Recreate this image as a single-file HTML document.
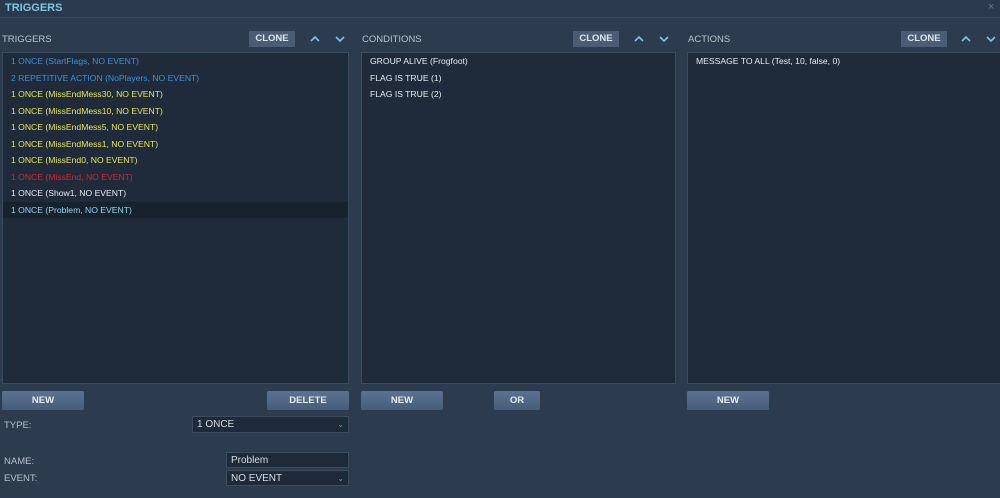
<!DOCTYPE html><html><head><style>
*{margin:0;padding:0;box-sizing:border-box}
body{width:1000px;height:498px;background:#2c3b4e;font-family:"Liberation Sans","DejaVu Sans",sans-serif;position:relative;overflow:hidden;color:#c8d0da}
.a{position:absolute}
.title{left:0;top:0;width:1000px;height:18px;background:#2a394b;border-bottom:1px solid #3d4d60}
.title span{position:absolute;left:5px;top:2px;font-weight:bold;font-size:11px;color:#7cc7e6}
.lbl{font-size:9.5px;color:#b8c2cc}
.list{background:#1f2b3a;border:1px solid #3c4b5d}
.row{height:16.5px;line-height:16.5px;font-size:8.6px;padding-left:8px;white-space:nowrap}
.clone{background:#4a5d74;color:#dfe6ee;font-weight:bold;font-size:9.5px;text-align:center;line-height:16px;height:16px}
.btn{background:linear-gradient(#5b7391,#465d79);color:#e4eaf0;font-weight:bold;font-size:9.5px;text-align:center;line-height:19px;height:19px;border-radius:2px}
.arr{color:#7cc7e6;font-size:11px}
.sel{background:#1e2a39;border:1px solid #3c4b5d;font-size:10px;color:#d5dce4;padding-left:4px;line-height:15px}
</style></head><body>
<div class="a title"><span>TRIGGERS</span><span style="left:988px;top:1px;color:#6a7888;font-weight:normal">×</span></div>

<div class="a lbl" style="left:2px;top:34px">TRIGGERS</div>
<div class="a clone" style="left:249px;top:31px;width:46px">CLONE</div>
<svg class="a" style="left:310px;top:34px" width="40" height="10"><path d="M1 7L5 3L9 7M26 3L30 7L34 3" stroke="#7cc7e6" stroke-width="1.6" fill="none"/></svg>
<div class="a list" style="left:2px;top:52px;width:347px;height:332px;padding-top:0px">
<div class="row" style="color:#3f8fdc">1 ONCE (StartFlags, NO EVENT)</div>
<div class="row" style="color:#3f8fdc">2 REPETITIVE ACTION (NoPlayers, NO EVENT)</div>
<div class="row" style="color:#e6e84a">1 ONCE (MissEndMess30, NO EVENT)</div>
<div class="row" style="color:#e6e84a">1 ONCE (MissEndMess10, NO EVENT)</div>
<div class="row" style="color:#e6e84a">1 ONCE (MissEndMess5, NO EVENT)</div>
<div class="row" style="color:#e6e84a">1 ONCE (MissEndMess1, NO EVENT)</div>
<div class="row" style="color:#e6e84a">1 ONCE (MissEnd0, NO EVENT)</div>
<div class="row" style="color:#d8252a">1 ONCE (MissEnd, NO EVENT)</div>
<div class="row" style="color:#e8ecf0">1 ONCE (Show1, NO EVENT)</div>
<div class="row" style="color:#8fd8ec;background:#18222f">1 ONCE (Problem, NO EVENT)</div>
</div>

<div class="a lbl" style="left:362px;top:34px">CONDITIONS</div>
<div class="a clone" style="left:573px;top:31px;width:46px">CLONE</div>
<svg class="a" style="left:634px;top:34px" width="40" height="10"><path d="M1 7L5 3L9 7M26 3L30 7L34 3" stroke="#7cc7e6" stroke-width="1.6" fill="none"/></svg>
<div class="a list" style="left:361px;top:52px;width:315px;height:332px">
<div class="row" style="color:#e8ecf0">GROUP ALIVE (Frogfoot)</div>
<div class="row" style="color:#e8ecf0">FLAG IS TRUE (1)</div>
<div class="row" style="color:#e8ecf0">FLAG IS TRUE (2)</div>
</div>

<div class="a lbl" style="left:688px;top:34px">ACTIONS</div>
<div class="a clone" style="left:901px;top:31px;width:46px">CLONE</div>
<svg class="a" style="left:961px;top:34px" width="40" height="10"><path d="M1 7L5 3L9 7M26 3L30 7L34 3" stroke="#7cc7e6" stroke-width="1.6" fill="none"/></svg>
<div class="a list" style="left:687px;top:52px;width:320px;height:332px">
<div class="row" style="color:#e8ecf0">MESSAGE TO ALL (Test, 10, false, 0)</div>
</div>

<div class="a btn" style="left:2px;top:391px;width:82px">NEW</div>
<div class="a btn" style="left:267px;top:391px;width:82px">DELETE</div>
<div class="a btn" style="left:361px;top:391px;width:82px">NEW</div>
<div class="a btn" style="left:494px;top:391px;width:46px">OR</div>
<div class="a btn" style="left:687px;top:391px;width:82px">NEW</div>

<div class="a lbl" style="left:4px;top:420px">TYPE:</div>
<div class="a sel" style="left:192px;top:416px;width:157px;height:17px">1 ONCE<span style="position:absolute;right:4px;color:#8896a6;font-size:8px">⌄</span></div>
<div class="a lbl" style="left:4px;top:456px">NAME:</div>
<div class="a sel" style="left:226px;top:452px;width:123px;height:16px">Problem</div>
<div class="a lbl" style="left:4px;top:473px">EVENT:</div>
<div class="a sel" style="left:226px;top:470px;width:123px;height:16px">NO EVENT<span style="position:absolute;right:4px;color:#8896a6;font-size:8px">⌄</span></div>
</body></html>
